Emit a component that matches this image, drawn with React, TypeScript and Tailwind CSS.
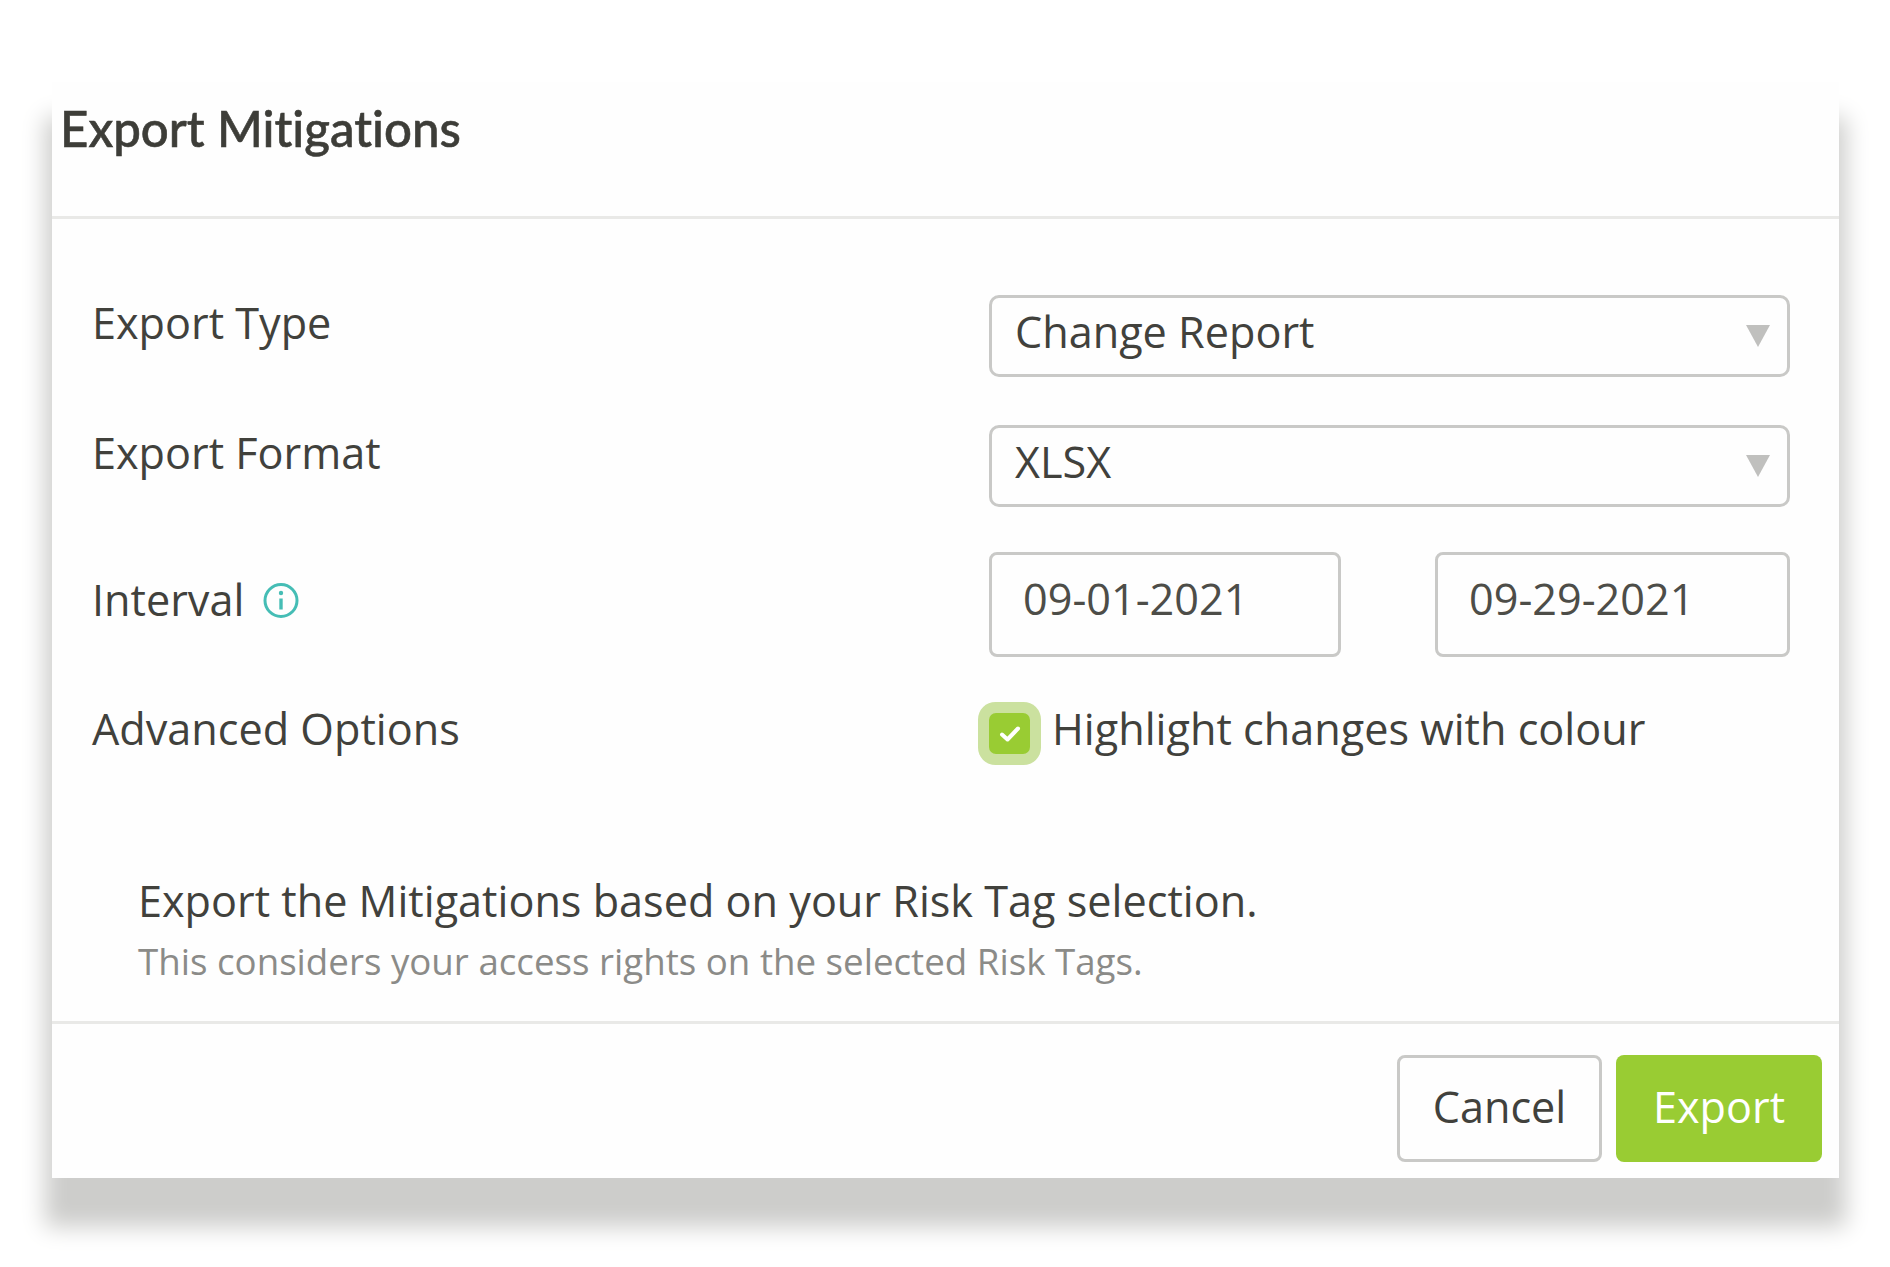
import React from "react";

const InfoIcon = () => (
  <svg width="36" height="37" viewBox="0 0 36 37" fill="none" className="ml-[19px] mt-[10px]">
    <circle cx="18" cy="18.5" r="16" stroke="#45bdb5" strokeWidth="3" />
    <circle cx="18" cy="11" r="2.2" fill="#45bdb5" />
    <path d="M18 16.5v11" stroke="#45bdb5" strokeWidth="3.4" />
  </svg>
);

const Caret = () => (
  <svg width="24" height="22" viewBox="0 0 24 22">
    <polygon points="0,0 24,0 12,22" fill="#c0c0be" />
  </svg>
);

const SelectBox: React.FC<{ value: string }> = ({ value }) => (
  <div className="flex h-[82px] w-[801px] items-center justify-between rounded-[10px] border-[3px] border-[#c9c9c7] pl-[23px] pr-[17px] text-[#41413c]">
    <span className="pb-[8px]">{value}</span>
    <Caret />
  </div>
);

const DateBox: React.FC<{ value: string; className: string }> = ({ value, className }) => (
  <div className={`flex h-[105px] items-center rounded-[8px] border-[3px] border-[#c9c9c7] pb-[11px] pl-[31px] text-[#4d4d48] ${className}`}>
    {value}
  </div>
);

export default function App() {
  return (
    <div className="h-[1267px] w-[1890px] overflow-hidden bg-white pl-[52px] pt-[82px] font-['Open_Sans',sans-serif]">
      <div className="flex h-[1096px] w-[1787px] flex-col bg-[#fefefe] shadow-[0_42px_22px_7px_#cdcdcb]">
        <div className="h-[137px] shrink-0 border-b-[3px] border-[#e9e9e7] pl-[8px] pt-[17px] font-['Lato',sans-serif] text-[49.2px] font-medium leading-[58px] text-[#3d3d38] [-webkit-text-stroke:0.6px_#3d3d38] [font-variant-ligatures:none]">
          Export Mitigations
        </div>

        <div className="flex flex-1 flex-col pl-[40px] pt-[76px] text-[43.2px] leading-[56px] text-[#41413c]">
          <div className="flex h-[82px]">
            <div className="w-[897px]">Export Type</div>
            <SelectBox value="Change Report" />
          </div>
          <div className="mt-[48px] flex h-[82px]">
            <div className="w-[897px]">Export Format</div>
            <SelectBox value="XLSX" />
          </div>
          <div className="mt-[45px] flex h-[105px]">
            <div className="flex w-[897px] items-start pt-[20px]">
              Interval
              <InfoIcon />
            </div>
            <DateBox value="09-01-2021" className="w-[352px]" />
            <DateBox value="09-29-2021" className="ml-[94px] w-[355px]" />
          </div>
          <div className="mt-[45px] flex h-[63px] items-center">
            <div className="w-[897px] pb-[9px]">Advanced Options</div>
            <div className="flex h-[41px] w-[41px] items-center justify-center rounded-[7px] bg-[#99cc33] shadow-[0_0_0_11px_#cbe19f]">
              <svg width="22" height="18" viewBox="0 0 22 18" fill="none">
                <path d="M3 9.5l5.5 5L19 3.5" stroke="#fff" strokeWidth="4" strokeLinecap="round" strokeLinejoin="round" />
              </svg>
            </div>
            <span className="ml-[22px] pb-[9px]">Highlight changes with colour</span>
          </div>

          <div className="mt-[108px] pl-[46px]">
            <div>Export the Mitigations based on your Risk Tag selection.</div>
            <div className="mt-[7px] text-[36.7px] leading-[50px] text-[#8b8b88]">
              This considers your access rights on the selected Risk Tags.
            </div>
          </div>
        </div>

        <div className="flex h-[157px] shrink-0 justify-end border-t-[3px] border-[#e9e9e7] pr-[17px] pt-[31px] text-[43.2px]">
          <button className="h-[107px] w-[205px] rounded-[8px] border-[3px] border-[#c9c9c7] pb-[2px] text-[#41413c]">
            Cancel
          </button>
          <button className="ml-[14px] h-[107px] w-[206px] rounded-[8px] bg-[#99cc33] pb-[2px] text-white">
            Export
          </button>
        </div>
      </div>
    </div>
  );
}
